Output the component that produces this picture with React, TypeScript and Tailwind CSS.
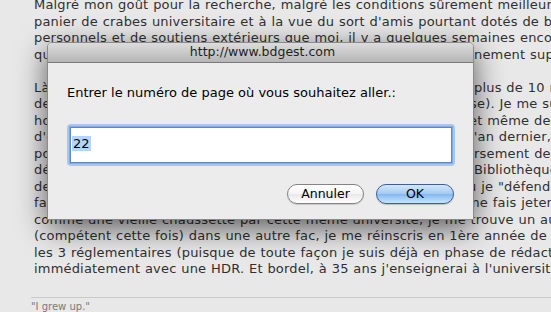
// Lines hidden in the middle by the dialog: [left part, right part, width class of the left part]
type Line = { text: string } | { left: string; right: string; w: string }

const introLines: Line[] = [
  { text: `Malgré mon goût pour la recherche, malgré les conditions sûrement meilleures que celles de bien des thésards du` },
  { text: `panier de crabes universitaire et à la vue du sort d'amis pourtant dotés de beaucoup plus de moyens` },
  { text: `personnels et de soutiens extérieurs que moi, il y a quelques semaines encore je pensais` },
  { left: `que je n'avais vraiment plus rien à faire dans le monde de l'enseig`, right: `nement supérieur. Et puis`, w: 'w-[440px]' },
]

const storyLines: Line[] = [
  { left: `Là, après deux années de galère et de contrats précaires pendant`, right: `plus de 10 mois d'affilée`, w: 'w-[440px]' },
  { left: `de monitorat (sans compter les heures pour boucler ma propre thè`, right: `se). Je me suis`, w: 'w-[436px]' },
  { left: `honteusement fait exploiter par mon ex-directeur de recherches,`, right: `et même des collègues`, w: 'w-[435px]' },
  { left: `d'enseignants assez contents de me déléguer leurs cours. Et puis,`, right: `l'an dernier, alors`, w: 'w-[436px]' },
  { left: `pour couronner le tout, l'université me réclame ensuite le rembou`, right: `rsement de tous les`, w: 'w-[440px]' },
  { left: `dédommagements perçus pendant que je travaillais aussi pour la`, right: `Bibliothèque universitaire`, w: 'w-[440px]' },
  { left: `de la FAC, sous le prétexte que je cumulais avec mon laboratoire o`, right: `ù je "défendais" ma`, w: 'w-[434px]' },
  { left: `faisant ainsi de moi un vil fraudeur. Bref, au bout de huit mois, je`, right: `me fais jeter`, w: 'w-[433px]' },
  { text: `comme une vieille chaussette par cette même université, je me trouve un autre directeur` },
  { text: `(compétent cette fois) dans une autre fac, je me réinscris en 1ère année de thèse pour` },
  { text: `les 3 réglementaires (puisque de toute façon je suis déjà en phase de rédaction) et j'enchaîne` },
  { text: `immédiatement avec une HDR. Et bordel, à 35 ans j'enseignerai à l'université !` },
]

function TextLine({ line }: { line: Line }) {
  if ('text' in line) return <div className="whitespace-nowrap">{line.text}</div>
  return (
    <div className="flex whitespace-nowrap">
      <span className={`${line.w} shrink-0 overflow-hidden`}>{line.left}</span>
      <span>{line.right}</span>
    </div>
  )
}

function PromptDialog() {
  return (
    <div className="absolute left-[47px] top-[42px] w-[427px] h-[178px] flex flex-col bg-[#ececec] border border-[#8a8a8a] rounded-t-[5px] shadow-[0_8px_30px_rgba(0,0,0,0.62)] font-['DejaVu_Sans',sans-serif] text-black">
      {/* title bar */}
      <div className="h-[20px] shrink-0 flex items-center justify-center pl-[4px] rounded-t-[4px] bg-[linear-gradient(#dcdcdc,#b6b6b6)] border-b border-[#7a7a7a] text-[12.5px] text-[#1e1e1e]">
        http://www.bdgest.com
      </div>

      <div className="flex-1 flex flex-col pl-[19px] pr-[18px] pt-[22px]">
        <div className="text-[13px] leading-[16px]">Entrer le numéro de page où vous souhaitez aller.:</div>

        {/* focused text field */}
        <div className="mt-[23px] h-[42px] p-[3px] rounded-[4px] bg-[#a9c6ec]">
          <div className="h-full bg-white border border-[#5f88c6] shadow-[0_0_0_1px_rgba(128,168,224,0.9)] pl-[1px] pt-[3px]">
            <span className="bg-[#b5d5fe] px-[1px] text-[13px] leading-[15px] inline-block">22</span>
          </div>
        </div>

        <div className="mt-[18px] flex justify-end gap-[12px] pr-[1px]">
          <button className="w-[77px] h-[20px] rounded-full border border-[#838383] bg-[linear-gradient(#ffffff,#f4f4f4_50%,#e8e8e8_51%,#ffffff)] text-[12.5px] leading-none shadow-[0_1px_1px_rgba(0,0,0,0.15)]">
            Annuler
          </button>
          <button className="w-[78px] h-[20px] rounded-full border border-[#3f5f9c] bg-[linear-gradient(#d4e7fb,#a2c9f3_50%,#84b8ef_51%,#c6e5fd)] text-[12.5px] leading-none shadow-[0_1px_1px_rgba(0,0,0,0.2)]">
            OK
          </button>
        </div>
      </div>
    </div>
  )
}

export default function App() {
  return (
    <div className="relative w-[551px] h-[312px] overflow-hidden bg-[#e8e8e8] font-['DejaVu_Sans',sans-serif]">
      <div className="pl-[31px] mt-[-3px]">
        <div className="pl-[3px] text-[13px] leading-[16.5px] text-[#303030] tracking-[0.18px] [word-spacing:0.45px]">
          <div className="mb-[16.5px]">
            {introLines.map((line, i) => (
              <TextLine key={i} line={line} />
            ))}
          </div>
          <div>
            {storyLines.map((line, i) => (
              <TextLine key={i} line={line} />
            ))}
          </div>
        </div>

        <div className="mt-[19px] border-t border-[#c9c9c9] pt-[3px] text-[10px] leading-[12px] text-[#7a7a7a]">
          "I grew up."
        </div>
      </div>

      <PromptDialog />
    </div>
  )
}
